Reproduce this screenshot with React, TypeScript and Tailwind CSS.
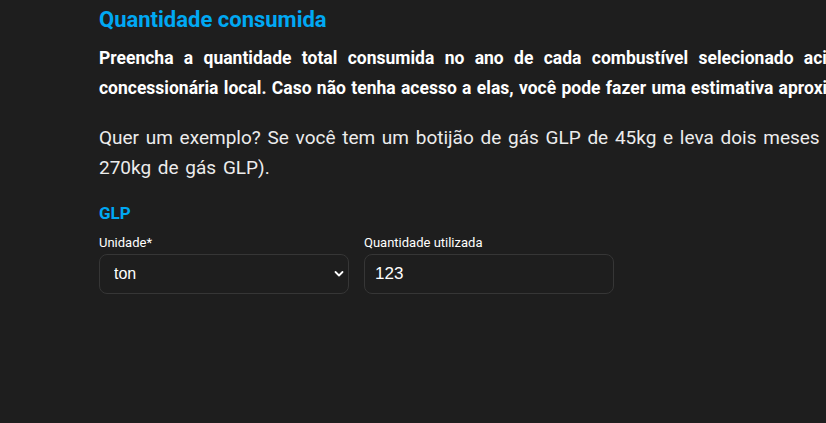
import { FC } from 'react';

const font = { fontFamily: '"Roboto", "Liberation Sans", sans-serif' };

const App: FC = () => {
  return (
    <div
      className="min-h-screen w-full overflow-hidden bg-[#1e1e1e] pl-[99px] pt-[4px] text-white"
      style={font}
    >
      <h1 className="whitespace-nowrap text-[22px] font-bold leading-[32px] text-[#00a8f3]">
        Quantidade consumida
      </h1>
      <p className="mt-[7px] whitespace-nowrap text-[17.5px] font-bold leading-[30px]">
        <span className="[word-spacing:6px]">
          Preencha a quantidade total consumida no ano de cada combustível selecionado acima. Esses dados
          podem ser encontrados nas faturas da
        </span>
        <br />
        <span className="[word-spacing:1px]">
          concessionária local. Caso não tenha acesso a elas, você pode fazer uma estimativa aproximada.
        </span>
      </p>
      <p className="mt-[20px] whitespace-nowrap text-[19px] leading-[30px] text-[#ececec] [word-spacing:2px]">
        Quer um exemplo? Se você tem um botijão de gás GLP de 45kg e leva dois meses para consumi-lo, em
        um ano você consome 6 botijões (ou seja,
        <br />
        270kg de gás GLP).
      </p>
      <h2 className="mt-[18px] text-[17px] font-bold leading-[24px] text-[#00a8f3]">GLP</h2>
      <div className="mt-[10px] flex gap-[15px]">
        <label className="flex w-[250px] flex-col gap-[3px]">
          <span className="text-[13px] leading-[16px]">Unidade*</span>
          <div className="relative">
            <select
              defaultValue="ton"
              className="h-[40px] w-full appearance-none rounded-[8px] border border-[#363636] bg-[#1e1e1e] px-[14px] text-[16px] text-white outline-none"
              style={{ fontFamily: '"Liberation Sans", sans-serif' }}
            >
              <option value="ton">ton</option>
              <option value="kg">kg</option>
            </select>
            <svg
              className="pointer-events-none absolute right-[5px] top-[16px]"
              width="10"
              height="8"
              viewBox="0 0 10 8"
              fill="none"
            >
              <path d="M1.5 2 L5 5.5 L8.5 2" stroke="white" strokeWidth="1.8" strokeLinecap="round" strokeLinejoin="round" />
            </svg>
          </div>
        </label>
        <label className="flex w-[250px] flex-col gap-[3px]">
          <span className="text-[13px] leading-[16px]">Quantidade utilizada</span>
          <input
            defaultValue="123"
            className="h-[40px] w-full rounded-[8px] border border-[#363636] bg-[#1e1e1e] px-[10px] text-[17px] text-white outline-none"
            style={{ fontFamily: '"Liberation Sans", sans-serif' }}
          />
        </label>
      </div>
    </div>
  );
};

export default App;
